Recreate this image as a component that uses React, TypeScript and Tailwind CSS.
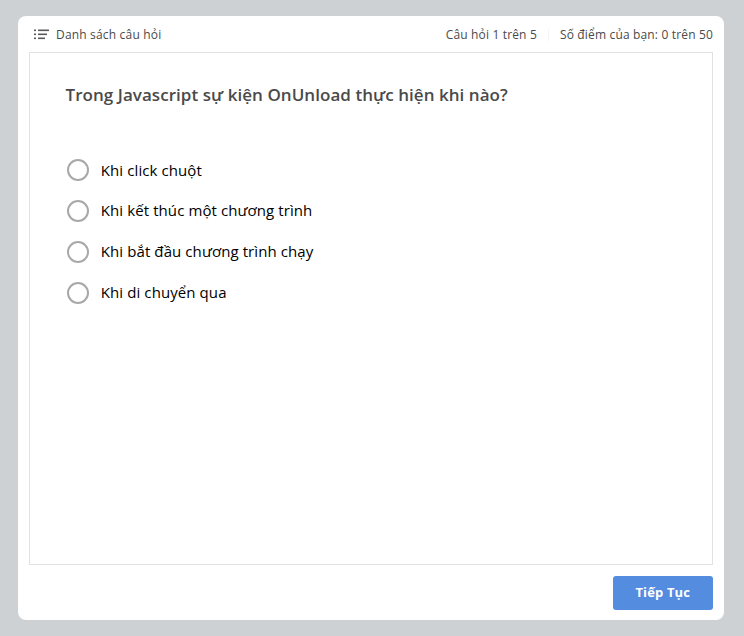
const answers = [
  "Khi click chuột",
  "Khi kết thúc một chương trình",
  "Khi bắt đầu chương trình chạy",
  "Khi di chuyển qua",
];

function ListIcon() {
  return (
    <svg width="15" height="11" viewBox="0 0 15 11" fill="#5a5a5a">
      <rect x="0" y="0.5" width="2" height="1.6" />
      <rect x="4" y="0.5" width="11" height="1.6" />
      <rect x="0" y="4.5" width="2" height="1.6" />
      <rect x="4" y="4.5" width="9" height="1.6" />
      <rect x="0" y="8.5" width="2" height="1.6" />
      <rect x="4" y="8.5" width="7" height="1.6" />
    </svg>
  );
}

export default function App() {
  return (
    <div className="flex h-[636px] w-[744px] bg-[#cdd1d4] pt-4 pr-5 pb-4 pl-[18px] font-['Open_Sans',sans-serif]">
      <main className="flex w-[706px] flex-col rounded-lg bg-white px-[11px]">
        <header className="flex h-9 items-center pt-0.5 text-[12px] text-[#4a4a4a]">
          <button className="flex items-center gap-[7px] pl-[5px] tracking-[0.18px]">
            <span className="pb-0.5"><ListIcon /></span>
            <span>Danh sách câu hỏi</span>
          </button>
          <span className="ml-auto tracking-[0.16px]">Câu hỏi 1 trên 5</span>
          <span className="ml-[11px] h-3 w-px bg-[#f5f5f5]" />
          <span className="ml-[11px] tracking-[0.16px]">Số điểm của bạn: 0 trên 50</span>
        </header>
        <section className="h-[513px] border border-[#e1e1e1] px-[35px] pt-[29px]">
          <h1 className="pl-[0.5px] text-[17px] leading-[26px] font-semibold tracking-[0.05px] text-[#4a4a4a]">
            Trong Javascript sự kiện OnUnload thực hiện khi nào?
          </h1>
          <ul className="mt-[42px] pl-[2.3px]">
            {answers.map((answer) => (
              <li key={answer} className="flex h-[40.8px] items-center gap-[11.5px] text-[15px] tracking-[0.09px] text-black">
                <span className="size-[22px] rounded-full border-2 border-[#a8a8a8]" />
                <span className="pb-[1.1px]">{answer}</span>
              </li>
            ))}
          </ul>
        </section>
        <footer className="flex justify-end pt-[10.5px]">
          <button className="h-[34px] w-[100.5px] rounded-[3px] bg-[#548ce0] text-[13px] font-bold tracking-[0.15px] text-white">Tiếp Tục</button>
        </footer>
      </main>
    </div>
  );
}
